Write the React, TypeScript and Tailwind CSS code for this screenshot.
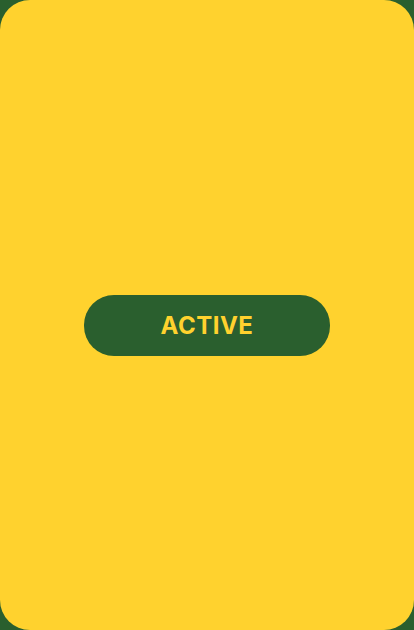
export default function App() {
  return (
    <div className="w-[414px] h-[630px] bg-[#2a5f2e]">
      <div className="w-full h-full bg-[#ffd22e] rounded-[30px] flex items-center justify-center pt-[21px]">
        <button className="w-[246px] h-[61px] rounded-[30px] bg-[#2a5f2e] text-[#ffd22e] text-[24px] font-bold tracking-[0.5px] [font-family:Inter,'Liberation_Sans',sans-serif]">
          ACTIVE
        </button>
      </div>
    </div>
  )
}
